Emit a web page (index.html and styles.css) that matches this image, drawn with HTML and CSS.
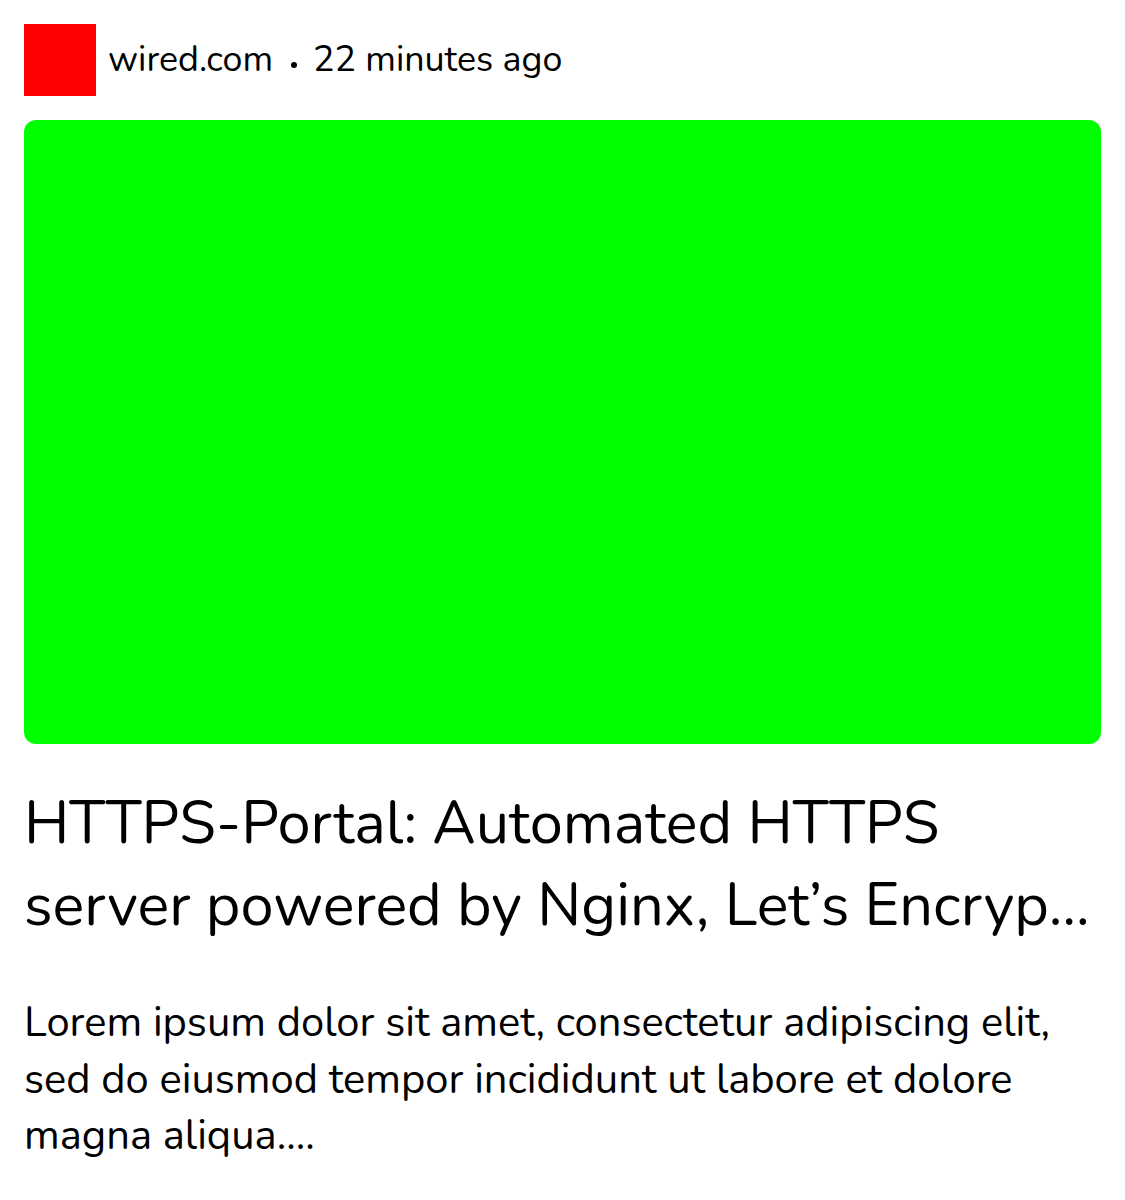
FILE: index.html
```html
<!DOCTYPE html>
<html lang="en">
<head>
<meta charset="utf-8">
<title>Article card</title>
<link rel="stylesheet" href="styles.css">
</head>
<body>
<article class="card">
  <header class="meta">
    <div class="logo"></div>
    <span class="source">wired.com</span>
    <span class="dot"></span>
    <span class="time">22 minutes ago</span>
  </header>
  <div class="image"></div>
  <h1 class="title">HTTPS-Portal: Automated HTTPS server powered by Nginx, Let’s Encrypt and Docker</h1>
  <p class="summary">Lorem ipsum dolor sit amet, consectetur adipiscing elit, sed do eiusmod tempor incididunt ut labore et dolore magna aliqua....</p>
</article>
</body>
</html>
```
FILE: styles.css
```css
html, body {
  margin: 0;
  padding: 0;
  background: #fff;
}
body {
  font-family: "Nunito", "Lato", "Noto Sans", sans-serif;
  color: #000;
}
.card {
  padding: 24px;
}
.meta {
  display: flex;
  align-items: center;
  height: 72px;
  font-size: 35.8px;
  line-height: 44px;
}
.logo {
  width: 72px;
  height: 72px;
  background: #ff0000;
  flex: none;
  margin-right: 12px;
}
.dot {
  width: 6px;
  height: 6px;
  border-radius: 50%;
  background: #000;
  margin: 10px 16px 0 18px;
}
.image {
  margin-top: 24px;
  height: 624px;
  background: #00ff00;
  border-radius: 12px;
}
.title {
  margin: 39px 0 0 0;
  font-size: 59.5px;
  font-weight: 400;
  line-height: 82px;
  display: -webkit-box;
  -webkit-line-clamp: 2;
  -webkit-box-orient: vertical;
  overflow: hidden;
}
.summary {
  margin: 48px 0 0 0;
  font-size: 41.7px;
  line-height: 56.6px;
}
```
